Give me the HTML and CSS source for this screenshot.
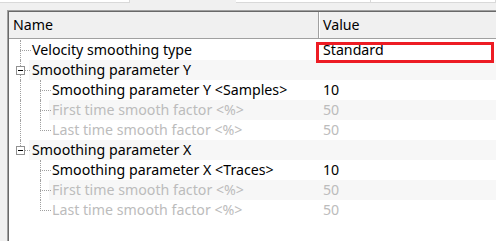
FILE: index.html
```html
<!DOCTYPE html>
<html lang="en">

<head>
    <meta charset="UTF-8">
    <meta name="viewport" content="width=device-width, initial-scale=1.0">
    <title>Properties</title>
    <link rel="stylesheet" href="styles.css">
</head>

<body>
    <div class="top-strip">
        <div class="strip-box first-box"></div>
        <div class="strip-gap"></div>
        <div class="strip-box second-box"></div>
        <div class="strip-box third-box"></div>
    </div>

    <div class="grid">
        <div class="header">
            <div class="head-cell name-head">Name</div>
            <div class="head-cell value-head">Value</div>
        </div>

        <div class="rows">
            <div class="row">
                <div class="name-cell">
                    <span class="guide tee"></span>
                    <span class="label">Velocity smoothing type</span>
                </div>
                <div class="value-cell">Standard</div>
            </div>

            <div class="row alt">
                <div class="name-cell">
                    <span class="guide expander"><span class="box"></span></span>
                    <span class="label">Smoothing parameter Y</span>
                </div>
                <div class="value-cell"></div>
            </div>

            <div class="row">
                <div class="name-cell">
                    <span class="guide pipe"></span>
                    <span class="guide tee"></span>
                    <span class="label">Smoothing parameter Y &lt;Samples&gt;</span>
                </div>
                <div class="value-cell">10</div>
            </div>

            <div class="row alt disabled">
                <div class="name-cell">
                    <span class="guide pipe"></span>
                    <span class="guide tee"></span>
                    <span class="label">First time smooth factor &lt;%&gt;</span>
                </div>
                <div class="value-cell">50</div>
            </div>

            <div class="row disabled">
                <div class="name-cell">
                    <span class="guide pipe"></span>
                    <span class="guide elbow"></span>
                    <span class="label">Last time smooth factor &lt;%&gt;</span>
                </div>
                <div class="value-cell">50</div>
            </div>

            <div class="row alt">
                <div class="name-cell">
                    <span class="guide expander last"><span class="box"></span></span>
                    <span class="label">Smoothing parameter X</span>
                </div>
                <div class="value-cell"></div>
            </div>

            <div class="row">
                <div class="name-cell">
                    <span class="guide"></span>
                    <span class="guide tee"></span>
                    <span class="label">Smoothing parameter X &lt;Traces&gt;</span>
                </div>
                <div class="value-cell">10</div>
            </div>

            <div class="row alt disabled">
                <div class="name-cell">
                    <span class="guide"></span>
                    <span class="guide tee"></span>
                    <span class="label">First time smooth factor &lt;%&gt;</span>
                </div>
                <div class="value-cell">50</div>
            </div>

            <div class="row disabled">
                <div class="name-cell">
                    <span class="guide"></span>
                    <span class="guide elbow"></span>
                    <span class="label">Last time smooth factor &lt;%&gt;</span>
                </div>
                <div class="value-cell">50</div>
            </div>
        </div>

        <div class="highlight"></div>
    </div>
</body>

</html>
```

FILE: styles.css
```css
* {
    margin: 0px;
    box-sizing: border-box;
}

body {
    background: #f0f0f0;
    font-family: "Noto Sans", "Open Sans", sans-serif;
    font-size: 14.2px;
    color: #000;
    width: 496px;
    height: 241px;
    overflow: hidden;
}

.top-strip {
    display: flex;
    height: 4px;
}

.strip-box {
    height: 3px;
    background: #fff;
    border-bottom: 1px solid #d9d9d9;
    border-right: 1px solid #d9d9d9;
}

.first-box {
    width: 130px;
}

.strip-gap {
    width: 106px;
}

.second-box {
    width: 135px;
}

.third-box {
    flex: 1;
}

.grid {
    position: relative;
    margin: 6px 0 0 7px;
    width: 489px;
    height: 231px;
    background: #fff;
    border-top: 1px solid #a0a0a0;
    border-left: 1px solid #a0a0a0;
    box-shadow: inset 1px 1px 0 #696969;
    padding: 1px 0 0 1px;
    overflow: hidden;
}

.header {
    display: grid;
    grid-template-columns: 310px 1fr;
    height: 27px;
    background: #f0f0f0;
    border-bottom: 1px solid #a0a0a0;
}

.head-cell {
    padding-left: 4px;
    line-height: 26px;
}

.name-head {
    border-right: 1px solid #a0a0a0;
    box-shadow: 1px 0 0 #fff;
}

.rows {
    padding-top: 1px;
}

.row {
    display: grid;
    grid-template-columns: 310px 1fr;
    height: 20px;
}

.name-cell {
    display: flex;
    height: 20px;
}

.label {
    flex: 1;
    padding-left: 3px;
    line-height: 20px;
    white-space: nowrap;
}

.value-cell {
    padding-left: 4px;
    line-height: 20px;
}

.row.alt .label,
.row.alt .value-cell {
    background: #f7f7f7;
}

.row.disabled {
    color: #bcbcbc;
}

.guide {
    position: relative;
    width: 20px;
    height: 20px;
    flex: none;
}

.pipe::before,
.tee::before,
.elbow::before {
    content: "";
    position: absolute;
    left: 11px;
    top: 0;
    height: 20px;
    border-left: 1px dotted #a0a0a0;
}

.elbow::before {
    height: 11px;
}

.tee::after,
.elbow::after {
    content: "";
    position: absolute;
    left: 11px;
    top: 10px;
    width: 11px;
    border-top: 1px dotted #a0a0a0;
}

.expander::before {
    content: "";
    position: absolute;
    left: 11px;
    top: 0;
    height: 20px;
    border-left: 1px dotted #a0a0a0;
}

.expander.last::before {
    height: 6px;
}

.expander::after {
    content: "";
    position: absolute;
    left: 16px;
    top: 10px;
    width: 5px;
    border-top: 1px dotted #a0a0a0;
}

.box {
    position: absolute;
    left: 7px;
    top: 6px;
    width: 9px;
    height: 9px;
    background: #fff;
    border: 1px solid #919191;
    z-index: 1;
}

.box::after {
    content: "";
    position: absolute;
    left: 1px;
    top: 3px;
    width: 5px;
    height: 1px;
    background: #000;
}

.highlight {
    position: absolute;
    left: 308px;
    top: 31px;
    width: 178px;
    height: 21px;
    border: 3px solid #ed1c24;
}
```
